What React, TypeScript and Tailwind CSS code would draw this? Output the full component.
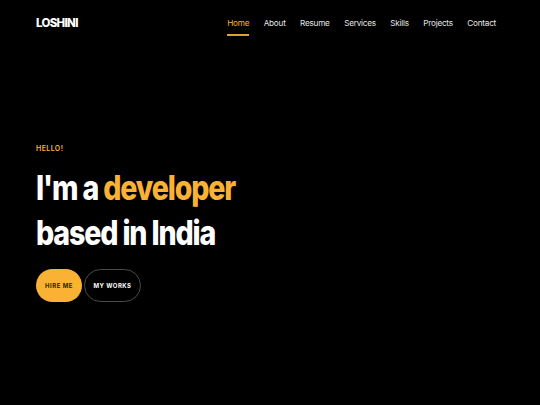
export default function App() {
  const nav = ["Home", "About", "Resume", "Services", "Skills", "Projects", "Contact"];
  return (
    <div className="w-[540px] h-[405px] bg-black overflow-hidden" style={{ fontFamily: "Inter, 'Noto Sans', sans-serif" }}>
      <header className="flex items-center justify-between pl-[36px] pr-[44px] h-[47px]">
        <div className="text-white font-extrabold text-[11.5px] tracking-[-0.06em]">LOSHINI</div>
        <nav className="flex items-center gap-[14.5px] text-[8.2px] tracking-[-0.03em] text-[#e5e5e5]">
          {nav.map((n, i) => (
            <div key={n} className={"relative " + (i === 0 ? "text-[#f9b233]" : "")}>
              {n}
              {i === 0 && <div className="absolute left-0 right-0 -bottom-[6px] h-[1.5px] bg-[#d9a23a]" />}
            </div>
          ))}
        </nav>
      </header>
      <main className="pl-[36px] pt-[97px]">
        <div className="text-[#f9b233] text-[7px] leading-[10px] font-semibold tracking-[0.06em]">HELLO!</div>
        <h1 className="mt-[11px] origin-left scale-x-[0.84] whitespace-nowrap text-white font-extrabold text-[34px] leading-[45px] tracking-[-0.04em]">
          I'm a <span className="text-[#f9b233]">developer</span>
          <br />
          based in India
        </h1>
        <div className="mt-[14px] flex gap-[2px]">
          <button className="h-[33px] w-[46px] rounded-full bg-[#f9b233] text-[#2a1e05] text-[6px] font-bold tracking-[0.08em]">HIRE ME</button>
          <button className="h-[33px] w-[57px] rounded-full border border-[#4a4a4a] text-white text-[6px] font-bold tracking-[0.08em]">MY WORKS</button>
        </div>
      </main>
    </div>
  );
}
